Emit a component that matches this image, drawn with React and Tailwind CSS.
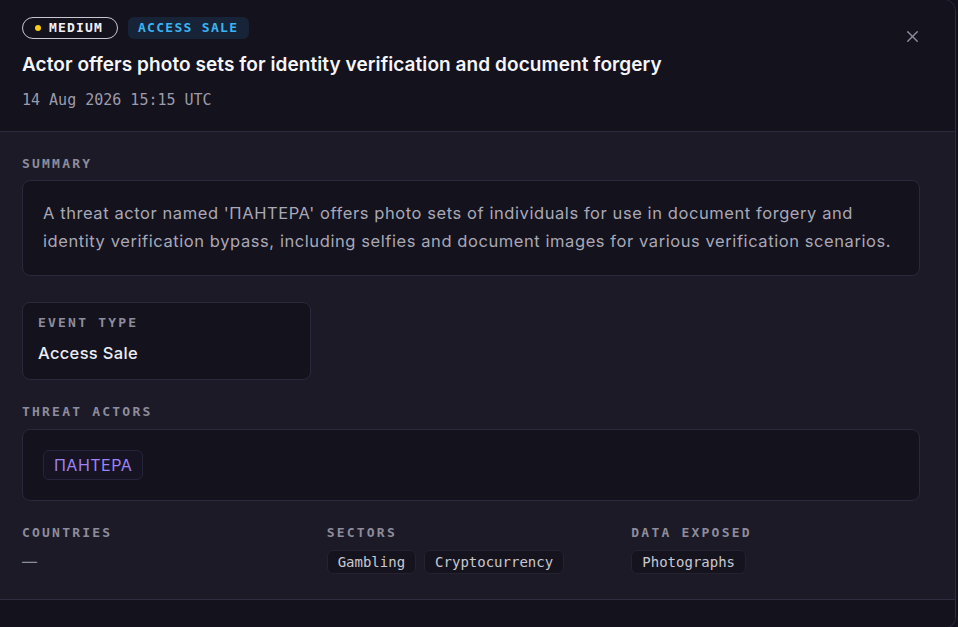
import React from 'react'
import { X } from 'lucide-react'

const mono = "font-['DejaVu_Sans_Mono',monospace]"
const sans = "font-['Inter','Noto_Sans',sans-serif]"

function Label({ children }) {
  return (
    <div className={`${mono} text-[13px] font-bold uppercase tracking-[0.17em] text-[#8e8c9c] leading-4`}>
      {children}
    </div>
  )
}

function Chip({ children }) {
  return (
    <span className={`${mono} inline-flex items-center h-6 px-[10px] rounded-md border border-[#24222f] bg-[#15141e] text-[14px] text-[#c9c8d2]`}>
      {children}
    </span>
  )
}

export default function App() {
  return (
    <div className="w-[958px] h-[627px] overflow-hidden bg-[#13111c]">
      <div className={`${sans} -mt-px -ml-px w-[957px] h-[630px] flex flex-col rounded-r-xl border border-[#2f2b45] bg-[#1b1a26] overflow-hidden`}>
        {/* header */}
        <div className="relative bg-[#13121d] border-b border-[#2c2a3b] pl-[22px] pt-[17px] h-[132px]">
          <div className="flex items-center gap-[10px]">
            <span className={`${mono} inline-flex items-center gap-2 h-[22px] pl-[12px] pr-[14px] rounded-full border border-[#c9c8d2] text-[13px] font-bold tracking-[0.09em] text-[#f1f0f6]`}>
              <span className="h-[6px] w-[6px] rounded-full bg-[#facc15]" />
              MEDIUM
            </span>
            <span className={`${mono} inline-flex items-center h-[22px] pl-[10px] pr-[11px] rounded-md bg-[#172437] text-[13px] font-bold tracking-[0.1em] text-[#3bb4f2]`}>
              ACCESS SALE
            </span>
          </div>
          <h1 className="mt-[12px] text-[19px] leading-[28px] font-semibold text-[#f6f5fa] tracking-[0.004em]">
            Actor offers photo sets for identity verification and document forgery
          </h1>
          <div className={`${mono} mt-[10px] text-[15px] text-[#9d9bab]`}>14 Aug 2026 15:15 UTC</div>
          <button className="absolute right-[33px] top-[27px] text-[#8e8c9c]">
            <X className="h-[19px] w-[19px]" strokeWidth={1.7} />
          </button>
        </div>

        {/* body */}
        <div className="flex-1 pl-[22px] pt-[24px] pr-[35px]">
          <Label>Summary</Label>
          <div className="mt-[8px] rounded-lg border border-[#2a283b] bg-[#13121d] pl-5 pr-4 pt-[18px] pb-[20px] text-[16.5px] tracking-[0.035em] leading-[28px] text-[#aaa8b6]">
            A threat actor named 'ПАНТЕРА' offers photo sets of individuals for use in document forgery and identity verification bypass, including selfies and document images for various verification scenarios.
          </div>

          <div className="mt-[26px] w-[289px] rounded-lg border border-[#2a283b] bg-[#13121d] pl-[15px] pt-[12px] h-[78px]">
            <Label>Event Type</Label>
            <div className="mt-[12px] text-[16.5px] leading-5 font-medium tracking-[0.02em] text-[#eeedf4]">Access Sale</div>
          </div>

          <div className="mt-[24px]">
            <Label>Threat Actors</Label>
          </div>
          <div className="mt-[9px] rounded-lg border border-[#2a283b] bg-[#13121d] h-[72px] pl-5 pt-[20px]">
            <span className="inline-flex items-center h-[30px] px-[10px] rounded-md border border-[#26243a] bg-[#161422] text-[16px] tracking-[0.03em] text-[#9f83f3]">
              ПАНТЕРА
            </span>
          </div>

          <div className="mt-[24px] grid grid-cols-3 gap-4">
            <div>
              <Label>Countries</Label>
              <div className="mt-[10px] text-[15px] text-[#8e8c9c]">—</div>
            </div>
            <div>
              <Label>Sectors</Label>
              <div className="mt-[9px] flex gap-2">
                <Chip>Gambling</Chip>
                <Chip>Cryptocurrency</Chip>
              </div>
            </div>
            <div>
              <Label>Data Exposed</Label>
              <div className="mt-[9px] flex gap-2">
                <Chip>Photographs</Chip>
              </div>
            </div>
          </div>
        </div>

        {/* footer */}
        <div className="h-[29px] border-t border-[#2e2c3f] bg-[#13121d]" />
      </div>
    </div>
  )
}
